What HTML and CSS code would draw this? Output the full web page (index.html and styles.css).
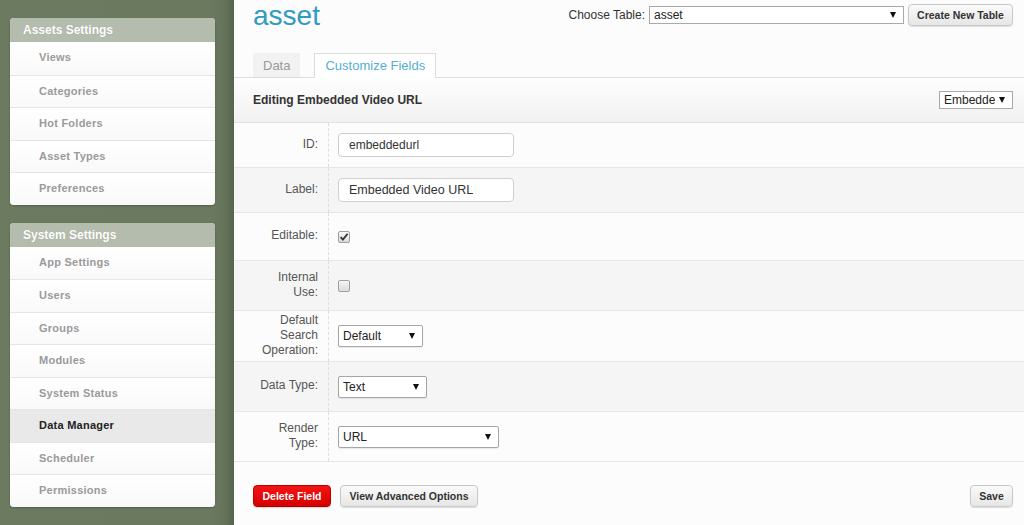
FILE: index.html
```html
<!DOCTYPE html>
<html>
<head>
<meta charset="utf-8">
<link rel="stylesheet" href="styles.css">
</head>
<body>
<div class="layout">
  <aside class="sidebar">
    <section class="panel">
      <div class="panel-head">Assets Settings</div>
      <ul class="panel-list">
        <li>Views</li>
        <li>Categories</li>
        <li>Hot Folders</li>
        <li>Asset Types</li>
        <li>Preferences</li>
      </ul>
    </section>
    <section class="panel">
      <div class="panel-head">System Settings</div>
      <ul class="panel-list">
        <li>App Settings</li>
        <li>Users</li>
        <li>Groups</li>
        <li>Modules</li>
        <li>System Status</li>
        <li class="active">Data Manager</li>
        <li>Scheduler</li>
        <li>Permissions</li>
      </ul>
    </section>
  </aside>
  <main class="main">
    <div class="topbar">
      <h1 class="title">asset</h1>
      <div class="tools">
        <span class="tools-label">Choose Table:</span>
        <div class="select select-table"><span class="select-text">asset</span><span class="arrow"></span></div>
        <button class="btn btn-gray btn-create">Create New Table</button>
      </div>
    </div>
    <div class="tabs">
      <div class="tab">Data</div>
      <div class="tab tab-active">Customize Fields</div>
    </div>
    <div class="edit-head">
      <span class="edit-title">Editing Embedded Video URL</span>
      <div class="select select-field"><span class="select-text">Embedde</span><span class="arrow"></span></div>
    </div>
    <div class="rows">
      <div class="row odd h45">
        <div class="label">ID:</div>
        <div class="value"><div class="input">embeddedurl</div></div>
      </div>
      <div class="row even h45">
        <div class="label">Label:</div>
        <div class="value"><div class="input input-large">Embedded Video URL</div></div>
      </div>
      <div class="row odd h48">
        <div class="label">Editable:</div>
        <div class="value"><span class="checkbox"><svg width="10" height="10" viewBox="0 0 10 10"><path d="M1.6 5.2 L3.9 7.6 L8.6 1.8" fill="none" stroke="#333" stroke-width="1.8"/></svg></span></div>
      </div>
      <div class="row even h50">
        <div class="label">Internal<br>Use:</div>
        <div class="value"><span class="checkbox"></span></div>
      </div>
      <div class="row odd h51">
        <div class="label">Default<br>Search<br>Operation:</div>
        <div class="value"><div class="select select-row w85"><span class="select-text">Default</span><span class="arrow"></span></div></div>
      </div>
      <div class="row even h50">
        <div class="label">Data Type:</div>
        <div class="value"><div class="select select-row w89"><span class="select-text">Text</span><span class="arrow"></span></div></div>
      </div>
      <div class="row odd h50">
        <div class="label">Render<br>Type:</div>
        <div class="value"><div class="select select-row w161"><span class="select-text">URL</span><span class="arrow"></span></div></div>
      </div>
    </div>
    <div class="footer">
      <div class="footer-left">
        <button class="btn btn-red">Delete Field</button>
        <button class="btn btn-gray btn-adv">View Advanced Options</button>
      </div>
      <button class="btn btn-gray btn-save">Save</button>
    </div>
  </main>
</div>
</body>
</html>
```

FILE: styles.css
```css
* { box-sizing: border-box; }
html, body { margin: 0; padding: 0; height: 100%; }
body {
  font-family: "Liberation Sans", Arial, sans-serif;
  font-size: 12px;
  color: #333;
  background: #fcfcfc;
  overflow: hidden;
}
.layout { display: flex; height: 525px; }

/* Sidebar */
.sidebar {
  width: 234px;
  flex: none;
  background: linear-gradient(to right, #6c7b60 0, #6b7a5f 210px, #64725a 226px, #56634d 234px);
  padding: 18px 0 0 10px;
  display: flex;
  flex-direction: column;
  gap: 18px;
}
.panel {
  width: 205px;
  border-radius: 4px;
  overflow: hidden;
  background: #fff;
  box-shadow: 0 1px 2px rgba(0,0,0,0.25);
}
.panel-head {
  height: 24px;
  line-height: 24px;
  padding-left: 13px;
  background: #b4bcad;
  color: #fff;
  font-weight: bold;
  font-size: 12px;
  text-shadow: 0 0 1px rgba(0,0,0,0.15);
}
.panel-list { list-style: none; margin: 0; padding: 0; }
.panel-list li {
  height: 32.5px;
  line-height: 31px;
  padding-left: 29px;
  font-size: 11px;
  font-weight: bold;
  letter-spacing: 0.25px;
  color: #9a9a9a;
  background: linear-gradient(#fff, #f9f9f9);
  border-top: 1px solid #e6e6e6;
  overflow: hidden;
}
.panel-list li:first-child { border-top: none; }
.panel-list li.active { background: #e9e9e9; color: #222; }

/* Main */
.main { flex: 1; display: flex; flex-direction: column; background: #fcfcfc; }
.topbar {
  height: 53px;
  display: flex;
  justify-content: space-between;
  align-items: flex-start;
  padding: 0 11px 0 19px;
}
.title {
  margin: 0;
  font-size: 28px;
  line-height: 31px;
  font-weight: normal;
  color: #2e9bbf;
}
.tools { display: flex; align-items: center; margin-top: 4px; }
.tools-label { font-size: 12px; color: #333; margin-right: 4px; }

.select {
  display: flex;
  align-items: center;
  background: #fff;
  border: 1px solid #a9a9a9;
  font-size: 12px;
  color: #222;
  overflow: hidden;
  white-space: nowrap;
}
.select-text { flex: 1; overflow: hidden; }
.arrow {
  flex: none;
  width: 0; height: 0;
  border-left: 3.5px solid transparent;
  border-right: 3.5px solid transparent;
  border-top: 6px solid #111;
  margin: 0 7px 0 4px;
}
.select-table { width: 255px; height: 18px; padding-left: 4px; margin-right: 4px; }
.select-field { width: 74px; height: 18px; padding-left: 4px; }
.select-row {
  height: 22px;
  padding-left: 4px;
  border-color: #a6a6a6;
  border-radius: 2px;
  box-shadow: 0 1px 1px rgba(0,0,0,0.08);
}
.w85 { width: 85px; }
.w89 { width: 89px; }
.w161 { width: 161px; }

.btn {
  font-family: "Liberation Sans", Arial, sans-serif;
  font-size: 10.5px;
  font-weight: bold;
  height: 22px;
  border-radius: 4px;
  padding: 0;
  cursor: pointer;
}
.btn-gray {
  color: #333;
  background: linear-gradient(#fafafa, #e6e6e6);
  border: 1px solid #c9c9c9;
  box-shadow: 0 1px 1px rgba(0,0,0,0.12);
}
.btn-create { width: 105px; }
.btn-adv { width: 138px; }
.btn-save { width: 43px; }
.btn-red {
  width: 78px;
  color: #fff;
  background: linear-gradient(#f41414, #d40000);
  border: 1px solid #b80000;
  box-shadow: 0 1px 1px rgba(0,0,0,0.15);
}

/* Tabs */
.tabs {
  display: flex;
  gap: 14px;
  padding-left: 19px;
  height: 25px;
  border-bottom: 1px solid #ddd;
}
.tab {
  height: 24px;
  padding: 0 10px;
  line-height: 25px;
  font-size: 13px;
  color: #999;
  background: #f2f2f2;
}
.tab-active {
  height: 25px;
  background: #fff;
  color: #55aed0;
  border: 1px solid #ddd;
  border-bottom: none;
  padding: 0 10px;
  line-height: 24px;
}

.edit-head {
  height: 45px;
  display: flex;
  align-items: center;
  justify-content: space-between;
  padding: 0 11px 0 19px;
  background: linear-gradient(#fefefe, #f1f1f1);
  border-bottom: 1px solid #e3e3e3;
}
.edit-title { font-weight: bold; font-size: 12px; color: #333; }

/* Rows */
.row {
  display: flex;
  border-bottom: 1px solid #e6e6e6;
}
.row.odd { background: #fcfcfc; }
.row.even { background: #f5f5f5; }
.h45 { height: 45px; }
.h48 { height: 48px; }
.h50 { height: 50px; }
.h51 { height: 51px; }
.label {
  width: 94px;
  padding-right: 10px;
  padding-bottom: 2px;
  text-align: right;
  font-size: 12px;
  line-height: 15px;
  color: #555;
  display: flex;
  align-items: center;
  justify-content: flex-end;
}
.value {
  flex: 1;
  padding-left: 9px;
  border-left: 1px dashed #dedede;
  display: flex;
  align-items: center;
}
.input {
  width: 176px;
  height: 24px;
  line-height: 22px;
  padding-left: 10px;
  background: #fff;
  border: 1px solid #cfcfcf;
  border-radius: 4px;
  font-size: 12px;
  color: #333;
}
.input-large { font-size: 12.5px; }
.checkbox {
  width: 12px;
  height: 12px;
  border: 1px solid #a0a0a0;
  border-radius: 2px;
  background: linear-gradient(#f6f6f6, #dcdcdc);
  display: flex;
  align-items: center;
  justify-content: center;
}

.footer {
  display: flex;
  justify-content: space-between;
  align-items: flex-start;
  padding: 23px 11px 0 19px;
}
.footer-left { display: flex; gap: 9px; }
```
